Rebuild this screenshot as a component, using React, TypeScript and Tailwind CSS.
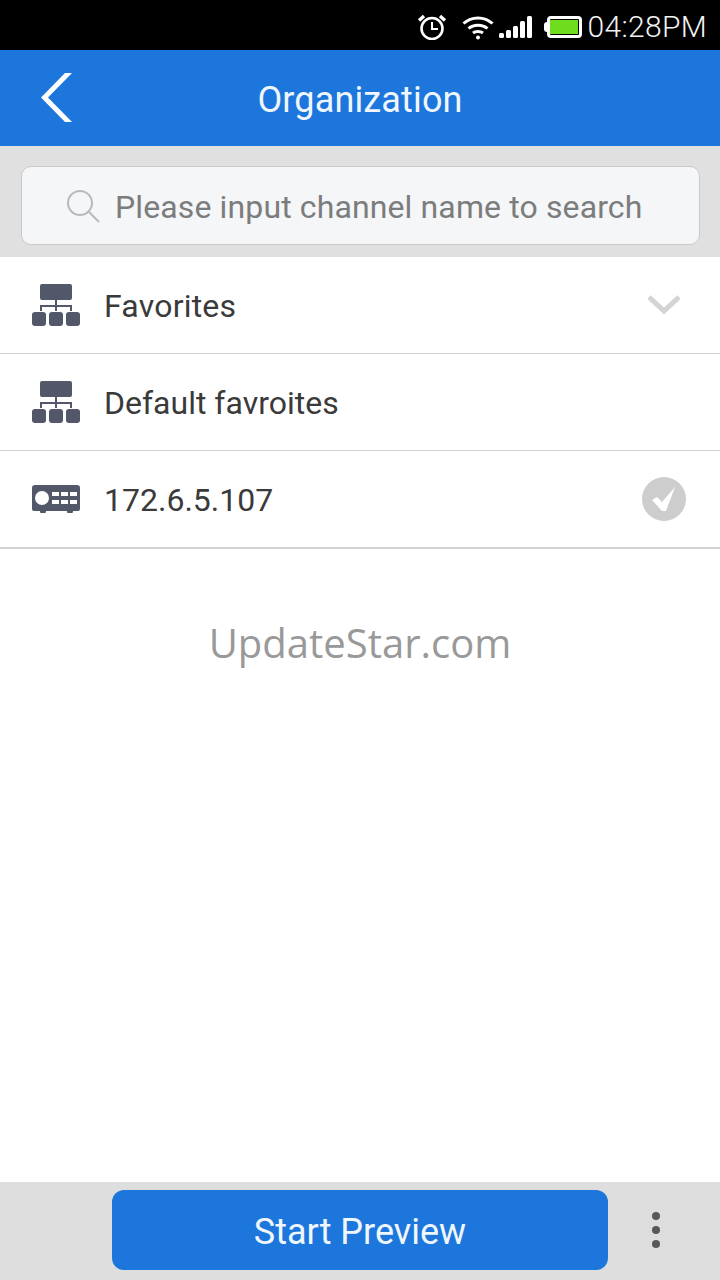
import React from 'react';

function OrgIcon() {
  return (
    <svg width="48" height="42" viewBox="0 0 48 42" fill="#52576a">
      <rect x="8" y="0" width="32" height="16" rx="2" />
      <path d="M23 16h2v5h15v6h-2v-4H25v4h-2v-4H10v4H8v-6h15z" />
      <rect x="0" y="28" width="14" height="14" rx="3" />
      <rect x="17" y="28" width="14" height="14" rx="3" />
      <rect x="34" y="28" width="14" height="14" rx="3" />
    </svg>
  );
}

function DeviceIcon() {
  return (
    <svg width="48" height="28" viewBox="0 0 48 28" fill="#52576a">
      <path d="M3 0h42a3 3 0 0 1 3 3v21a2 2 0 0 1-2 2h-5a3 3 0 0 1-6 0H14a3 3 0 0 1-6 0H2a2 2 0 0 1-2-2V3a3 3 0 0 1 3-3z" />
      <circle cx="10" cy="13" r="7" fill="#fff" />
      <g fill="#fff">
        <rect x="20" y="7" width="7" height="4" />
        <rect x="29" y="7" width="7" height="4" />
        <rect x="38" y="7" width="7" height="4" />
        <rect x="20" y="15" width="7" height="4" />
        <rect x="29" y="15" width="7" height="4" />
        <rect x="38" y="15" width="7" height="4" />
      </g>
    </svg>
  );
}

function StatusIcons() {
  return (
    <>
      <svg width="30" height="26" viewBox="0 0 30 26" fill="none" stroke="#fff">
        <circle cx="15" cy="14.5" r="10.5" strokeWidth="2.6" />
        <path d="M15 8v7h6" strokeWidth="2" />
        <path d="M2 6.5 7 2M28 6.5 23 2" strokeWidth="3.4" />
      </svg>
      <svg className="ml-[15px]" width="32" height="25" viewBox="0 0 32 25" fill="none" stroke="#fff" strokeWidth="3">
        <path d="M1.5 8.5C9.5 1 22.5 1 30.5 8.5" />
        <path d="M6.5 13.5c5-4.5 14-4.5 19 0" />
        <path d="M11 18c2.5-2 7.5-2 10 0" />
        <circle cx="16" cy="22.5" r="2" fill="#fff" stroke="none" />
      </svg>
      <svg className="ml-[5px]" width="34" height="24" viewBox="0 0 34 24" fill="#fff">
        <rect x="0" y="18" width="5" height="5" rx="1.5" />
        <rect x="7" y="15" width="5" height="8" rx="1.5" />
        <rect x="14" y="11" width="5" height="12" rx="1.5" />
        <rect x="21" y="6" width="5" height="17" rx="1.5" />
        <rect x="28" y="1" width="5" height="22" rx="1.5" />
      </svg>
      <div className="ml-[11px] flex items-center">
        <div className="h-[10px] w-[3px] rounded-l-sm bg-white" />
        <div className="flex h-[22px] w-[35px] items-center justify-center rounded-[4px] border-[3px] border-white">
          <div className="h-[14px] w-[28px] bg-[#6fdc1e]" />
        </div>
      </div>
    </>
  );
}

export default function App() {
  return (
    <div className="flex h-[1280px] w-[720px] flex-col overflow-hidden bg-white font-['Roboto',sans-serif]">
      <div className="flex h-[50px] items-center justify-end bg-black pt-[4px] pr-[13px]">
        <StatusIcons />
        <span className="ml-[6px] text-[30px] leading-none font-light tracking-[0.3px] text-[#f2f2f2]">04:28PM</span>
      </div>

      <div className="relative flex h-[96px] items-center justify-center bg-[#1c76dc]">
        <svg className="absolute top-[23px] left-[40px]" width="32" height="49" viewBox="0 0 32 49" fill="#fff">
          <polygon points="1,24.5 25,0 32,0 8,24.5 32,49 25,49" />
        </svg>
        <span className="pt-[3px] text-[36px] tracking-[0.15px] text-[#f0f6fd]">Organization</span>
      </div>

      <div className="h-[111px] bg-[#e0e0e0] pt-[20px] pr-[20px] pl-[21px]">
        <div className="flex h-[79px] items-center rounded-[10px] border border-[#c9c9c9] bg-[#f4f6f8] pl-[44px]">
          <svg width="34" height="34" viewBox="0 0 34 34" fill="none" stroke="#b9b9b9" strokeWidth="2">
            <circle cx="14" cy="14" r="12" />
            <path d="m23 23 10 10" />
          </svg>
          <span className="ml-[15px] pt-[2px] text-[32px] tracking-[0.12px] text-[#7c7c7c]">Please input channel name to search</span>
        </div>
      </div>

      <div className="flex h-[97px] items-center border-b border-[#cfcfcf] pr-[40px] pl-[32px]">
        <OrgIcon />
        <span className="ml-[24px] flex-1 pt-[2px] text-[32px] tracking-[0.2px] text-[#3a3a3a]">Favorites</span>
        <svg width="32" height="20" viewBox="0 0 32 20" fill="none" stroke="#d4d4d4" strokeWidth="5">
          <path d="M1 2 16 16 31 2" />
        </svg>
      </div>
      <div className="flex h-[97px] items-center border-b border-[#cfcfcf] pl-[32px]">
        <OrgIcon />
        <span className="ml-[24px] pt-[2px] text-[32px] text-[#3a3a3a]">Default favroites</span>
      </div>
      <div className="flex h-[98px] items-center border-b-2 border-[#d2d2d2] pr-[34px] pl-[32px]">
        <DeviceIcon />
        <span className="ml-[24px] flex-1 pt-[2px] text-[32px] text-[#3a3a3a]">172.6.5.107</span>
        <div className="flex h-[44px] w-[44px] items-center justify-center rounded-full bg-[#cdcdcd]">
          <svg width="28" height="28" viewBox="0 0 28 28" fill="#fff">
            <path d="M2 15l5-3 5 5L25 2l-9 24h-4z" />
          </svg>
        </div>
      </div>

      <div className="flex-1 pt-[68px] text-center font-['Open_Sans',sans-serif] text-[40px] leading-[52px] text-[#999]">
        UpdateStar.com
      </div>

      <div className="flex h-[98px] items-start bg-[#dedede] pt-[8px] pl-[112px]">
        <button className="h-[80px] w-[496px] rounded-[12px] bg-[#1c76dc] pt-[3px] text-[36px] text-[#f0f6fd]">Start Preview</button>
        <div className="ml-[44px] flex h-[80px] flex-col items-center justify-center gap-[6px]">
          <div className="h-[8px] w-[8px] rounded-full bg-[#58585c]" />
          <div className="h-[8px] w-[8px] rounded-full bg-[#58585c]" />
          <div className="h-[8px] w-[8px] rounded-full bg-[#58585c]" />
        </div>
      </div>
    </div>
  );
}
